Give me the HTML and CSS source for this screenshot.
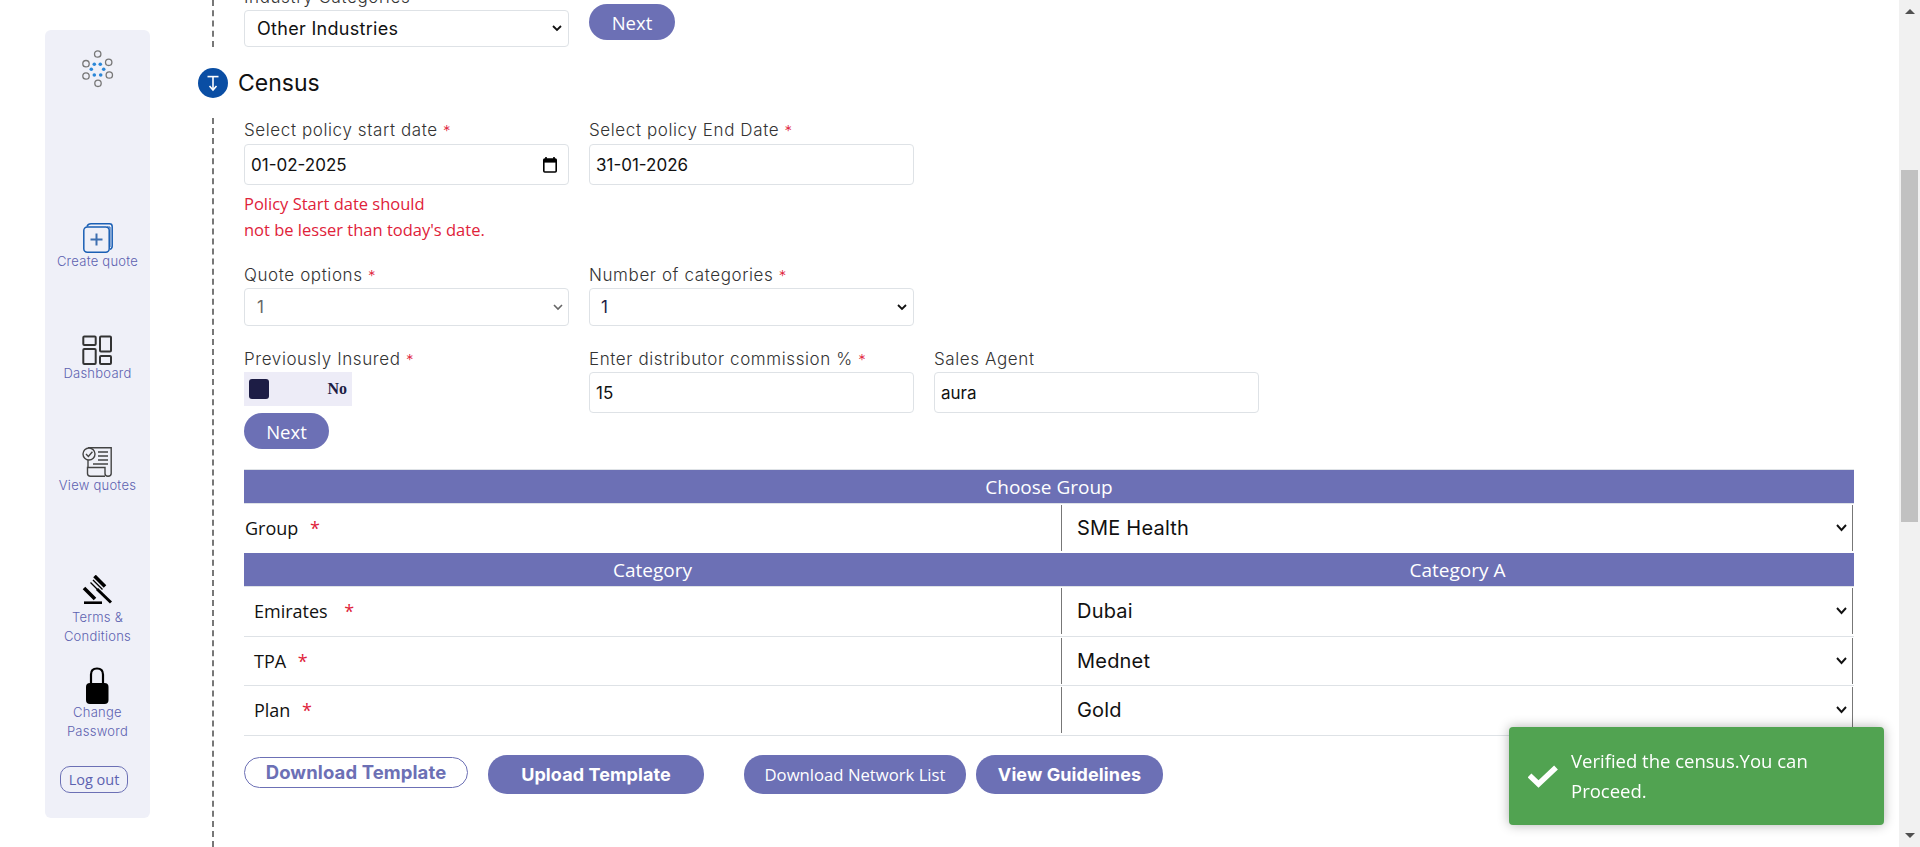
FILE: index.html
```html
<!DOCTYPE html>
<html lang="en">
<head>
<meta charset="utf-8">
<title>Census</title>
<link rel="stylesheet" href="styles.css">
</head>
<body>
<div class="app">
  <div class="side-wrap">
    <nav class="sidebar">
      <svg class="logo" viewBox="0 0 36 38" width="36" height="38">
        <g fill="none" stroke="#777" stroke-width="1.3">
          <circle cx="17.7" cy="4" r="3.2"/><circle cx="6" cy="13.7" r="3.2"/><circle cx="28.7" cy="12.3" r="3.2"/>
          <circle cx="6" cy="26" r="3.2"/><circle cx="29.3" cy="25" r="3.2"/><circle cx="18" cy="33.3" r="3.2"/>
        </g>
        <g fill="#2b87d8">
          <circle cx="14.3" cy="14.3" r="1.8"/><circle cx="20.3" cy="14.3" r="1.8"/><circle cx="11.3" cy="19.3" r="1.8"/>
          <circle cx="23.7" cy="19.3" r="1.8"/><circle cx="14.3" cy="25" r="1.8"/><circle cx="20.7" cy="25" r="1.8"/>
        </g>
      </svg>
      <a class="nav-item nav-create">
        <svg viewBox="0 0 30 30" width="30" height="30" fill="none" stroke="#1a5fb4" stroke-width="1.5">
          <path d="M4 3.6 Q5 .8 8 .8 H26.5 Q29.2 .8 29.2 3.5 V23 Q29.2 25.6 27 26.4"/>
          <path d="M24 4 H27 V24" stroke-width="1"/>
          <rect x=".8" y="4" width="25.4" height="25.2" rx="3.5"/>
          <path d="M13.5 10.5 V22.5 M7.5 16.5 H19.5" stroke="#3e6fb0" stroke-width="2"/>
        </svg>
        <span>Create quote</span>
      </a>
      <a class="nav-item nav-dash">
        <svg viewBox="0 0 30 30" width="30" height="30" fill="none" stroke="#333" stroke-width="2">
          <rect x="1.3" y="1.6" width="12.4" height="8.4" rx="1"/>
          <rect x="18" y="1.6" width="11" height="15" rx="1"/>
          <rect x="1.3" y="14" width="12.4" height="15" rx="1"/>
          <rect x="18" y="21" width="11" height="8" rx="1"/>
        </svg>
        <span>Dashboard</span>
      </a>
      <a class="nav-item nav-view">
        <svg viewBox="0 0 30 30" width="30" height="30" fill="none" stroke="#444" stroke-width="1.4">
          <path d="M6 .8 H29.2 V26.5 Q29.2 29.2 26 29.2"/>
          <path d="M6 13 V20 M23 29.2 H8.5 Q5.5 29.2 5.5 26.5 V20.5 H23 V26.5 Q23 29.2 26 29.2"/>
          <circle cx="7" cy="7" r="6" fill="#eff0f8"/>
          <path d="M4 7 L6.4 9.4 L10.4 4.8"/>
          <path d="M16 5 H26 M16 9 H26 M16 13 H26 M11 17 H26" stroke-width="1.6"/>
        </svg>
        <span>View quotes</span>
      </a>
      <a class="nav-item nav-terms">
        <svg viewBox="0 0 30 30" width="30" height="30" fill="#000" stroke="#000">
          <path d="M2 27.7 H20" stroke-width="2.6"/>
          <path d="M2 13 L13 24 M12.5 1 L23 11.5" stroke-width="3.6"/>
          <path d="M8.5 7.5 L18 17 M11 5 L20.5 14.5" stroke-width="1.4"/>
          <path d="M15 14 L29 27.5" stroke-width="3"/>
        </svg>
        <span>Terms &amp;<br>Conditions</span>
      </a>
      <a class="nav-item nav-lock">
        <svg viewBox="0 0 24 37" width="24" height="37">
          <path d="M6 18 V7.5 Q6 1.5 12 1.5 Q18 1.5 18 7.5 V18" fill="none" stroke="#000" stroke-width="2.2"/>
          <rect x="1" y="16" width="22.5" height="21" rx="4" fill="#000"/>
        </svg>
        <span>Change<br>Password</span>
      </a>
      <button class="logout">Log out</button>
    </nav>
  </div>

  <main class="main">
    <section class="step step-top">
      <div class="top-row">
        <div class="field-top">
          <label class="label">Industry Categories</label>
          <select class="control"><option>Other Industries</option></select>
        </div>
        <button class="btn-next">Next</button>
      </div>
    </section>

    <h2 class="step-title">
      <span class="step-badge">
        <svg viewBox="0 0 30 30" width="30" height="30" fill="none" stroke="#fff" stroke-width="1.6">
          <path d="M9.5 8.6 H20.5"/><path d="M15 9 V21"/><path d="M11.5 18 L15 22 L18.5 18"/>
        </svg>
      </span>
      Census
    </h2>

    <section class="step step-census">
      <div class="form-grid">
        <div class="field">
          <label class="label">Select policy start date <i class="req">*</i></label>
          <div class="date-box">
            <input class="control control-tall" type="text" value="01-02-2025">
            <svg class="cal-icon" viewBox="0 0 14 16" width="14" height="16">
              <path d="M3 0 V3 M11 0 V3" stroke="#000" stroke-width="1.6"/>
              <rect x=".8" y="2" width="12.4" height="13" rx="1" fill="none" stroke="#000" stroke-width="1.6"/>
              <rect x=".8" y="2" width="12.4" height="3.6" fill="#000"/>
            </svg>
          </div>
          <p class="error">Policy Start date should<br>not be lesser than today's date.</p>
        </div>
        <div class="field">
          <label class="label">Select policy End Date <i class="req">*</i></label>
          <input class="control control-tall" type="text" value="31-01-2026">
        </div>
        <div></div>

        <div class="field">
          <label class="label">Quote options <i class="req">*</i></label>
          <select class="control control-muted" disabled><option>1</option></select>
        </div>
        <div class="field">
          <label class="label">Number of categories <i class="req">*</i></label>
          <select class="control control-num"><option>1</option></select>
        </div>
        <div></div>

        <div class="field">
          <label class="label">Previously Insured <i class="req">*</i></label>
          <div class="toggle"><span class="knob"></span><b>No</b></div>
          <button class="btn-next btn-next-2">Next</button>
        </div>
        <div class="field">
          <label class="label">Enter distributor commission % <i class="req">*</i></label>
          <input class="control control-tall" type="text" value="15">
        </div>
        <div class="field">
          <label class="label">Sales Agent</label>
          <input class="control control-tall" type="text" value="aura">
        </div>
      </div>

      <table class="plan-table">
        <colgroup><col class="col-a"><col class="col-b"></colgroup>
        <tr class="head-row first"><th colspan="2">Choose Group</th></tr>
        <tr class="group-row">
          <td class="cell-group">Group <i class="req req-gap">*</i></td>
          <td class="cell-select"><select><option>SME Health</option></select></td>
        </tr>
        <tr class="head-row"><th>Category</th><th>Category A</th></tr>
        <tr>
          <td>Emirates <i class="req req-gap2">*</i></td>
          <td class="cell-select"><select><option>Dubai</option></select></td>
        </tr>
        <tr>
          <td>TPA <i class="req req-gap">*</i></td>
          <td class="cell-select"><select><option>Mednet</option></select></td>
        </tr>
        <tr>
          <td>Plan <i class="req req-gap">*</i></td>
          <td class="cell-select"><select><option>Gold</option></select></td>
        </tr>
      </table>

      <div class="actions">
        <button class="pill pill-outline">Download Template</button>
        <button class="pill pill-strong pill-upload">Upload Template</button>
        <button class="pill pill-plain">Download Network List</button>
        <button class="pill pill-strong pill-guide">View Guidelines</button>
      </div>
    </section>
  </main>

  <div class="scrollbar">
    <span class="arrow arrow-up"></span>
    <span class="thumb"></span>
    <span class="arrow arrow-down"></span>
  </div>
</div>

<div class="toast">
  <svg viewBox="0 0 30 24" width="30" height="24" fill="none" stroke="#fff" stroke-width="5.5">
    <path d="M1.5 11.5 L10.5 20 L28 3.5"/>
  </svg>
  <span>Verified the census.You can Proceed.</span>
</div>
</body>
</html>
```

FILE: styles.css
```css
* { box-sizing: border-box; }
html, body { margin: 0; height: 847px; overflow: hidden; background: #fff; }
body { font-family: "Open Sans", "Noto Sans", sans-serif; color: #111; }

.app { display: flex; height: 847px; overflow: hidden; }

/* sidebar */
.side-wrap { flex: none; width: 150px; padding: 30px 0 29px 45px; }
.sidebar {
  width: 105px; height: 788px; background: #eff0f8; border-radius: 6px;
  display: flex; flex-direction: column; align-items: center;
}
.logo { margin-top: 20px; margin-left: 1px; flex: none; }
.nav-item {
  display: flex; flex-direction: column; align-items: center; text-align: center;
  font-family: Inter, sans-serif; font-weight: 300; font-size: 13px; letter-spacing: .25px; line-height: 19px; color: #5d62b0;
}
.nav-item svg { display: block; margin-bottom: -1px; }
.nav-create { margin-top: 135px; }
.nav-dash { margin-top: 64px; }
.nav-view { margin-top: 64px; }
.nav-terms { margin-top: 80px; }
.nav-terms svg { margin-bottom: 3px; }
.nav-lock { margin-top: 21px; }
.nav-lock svg { margin-bottom: -1.5px; }
.logout {
  margin-top: 25.5px; margin-right: 7px; width: 68px; height: 27px; padding: 0;
  border: 1px solid #6c70b5; border-radius: 10px; background: transparent;
  font: 14.5px "Open Sans", sans-serif; color: #5d62b0;
}

/* main column */
.main { flex: none; width: 1749px; padding-left: 48px; }
.step { margin-left: 14px; border-left: 2px dashed #777; padding-left: 30px; display: flow-root; }
.step-top { height: 47px; }
.top-row { display: flex; gap: 20px; margin-top: -13px; }
.field-top { width: 325px; flex: none; }
.field-top .label { height: 23px; margin: 0; }
.top-row .btn-next { margin-top: 17px; width: 86px; }

.step-title {
  display: flex; align-items: center; gap: 10px; margin: 21px 0 20px; height: 30px;
  font: 400 23px Inter, sans-serif; color: #111;
}
.step-badge {
  width: 30px; height: 30px; border-radius: 50%; background: #0a4ea4; flex: none; display: block;
}
.step-badge svg { display: block; }

.step-census { padding-top: 2px; height: 729px; }

.form-grid { display: grid; grid-template-columns: repeat(3, 325px); column-gap: 20px; width: 1015px; }
.field { display: flex; flex-direction: column; align-items: stretch; }
.label {
  display: block; height: 20px; margin-bottom: 4px;
  font: 300 17px/20px Inter, sans-serif; letter-spacing: .6px; color: #333; white-space: nowrap;
}
.req { color: #e0223a; font-style: normal; font-size: 15px; letter-spacing: 0; }

.control {
  display: block; width: 100%; height: 38px; border: 1px solid #dee2e6; border-radius: 4px;
  background: #fff; padding: 0 6px; font: 400 17px "Inter", sans-serif; color: #111; outline: none;
}
select.control {
  appearance: none; padding-left: 12px;
  background: #fff url("data:image/svg+xml,%3Csvg xmlns='http://www.w3.org/2000/svg' width='10' height='7'%3E%3Cpath d='M1 1 L5 5 L9 1' fill='none' stroke='%23111' stroke-width='1.8'/%3E%3C/svg%3E") no-repeat right 6px center;
}
.field-top .control { height: 37px; font-size: 18px; letter-spacing: .3px; }
.control-tall { height: 41px; }
select.control-muted {
  color: #666; opacity: 1; padding-left: 12px; background-position: right 5px center;
  background-image: url("data:image/svg+xml,%3Csvg xmlns='http://www.w3.org/2000/svg' width='10' height='7'%3E%3Cpath d='M1 1 L5 5 L9 1' fill='none' stroke='%23666' stroke-width='1.6'/%3E%3C/svg%3E");
}
select.control-num { color: #1d1d45; padding-left: 11px; }
.date-box { position: relative; }
.cal-icon { position: absolute; right: 12px; top: 13px; }

.error {
  margin: 6px 0 22px; font-size: 16.5px; line-height: 26px; color: #e0223a;
}
.form-grid > .field:nth-child(4), .form-grid > .field:nth-child(5) { margin-bottom: 23px; }
.field:nth-child(n+4) .label { margin-bottom: 3px; }

.toggle {
  width: 108px; height: 34px; background: #edecf7; display: flex; align-items: center;
  justify-content: space-between; padding: 0 5px;
}
.knob { width: 20px; height: 20px; background: #1d1d45; border-radius: 3px; }
.toggle b { font: 700 16px "Liberation Serif", serif; color: #1d1d45; }

.btn-next {
  height: 36px; width: 85px; border: none; border-radius: 18px; background: #6c70b5;
  color: #fff; font: 400 18.5px "Open Sans", sans-serif; padding: 0;
}
.btn-next-2 { margin-top: 7px; }

/* table */
.plan-table {
  width: 1610px; margin-top: 20px; border-collapse: collapse; table-layout: fixed;
  font-size: 18px;
}
.col-a { width: 817px; }
.col-b { width: 793px; }
.plan-table th {
  height: 34px; padding: 1px 0 0; background: #6c70b5; color: #fff; font-weight: 400; font-size: 19px;
  border-bottom: 1px solid #dee2e6;
}
.head-row.first th { border-top: 1px solid #dee2e6; }
.plan-table td {
  height: 49.5px; padding: 0 0 0 10px; border-bottom: 1px solid #dee2e6; color: #111;
}
.plan-table td.cell-group { padding-left: 1px; border-bottom: none; }
.group-row td { height: 49px; border-bottom: none; }
.plan-table .req { font-size: 18px; }
.req-gap { margin-left: 7px; }
.req-gap2 { margin-left: 12px; }
.plan-table td.cell-select { padding: 0 1px 0 0; }
.cell-select select {
  display: block; width: 792px; height: 46px; border: none; border-left: 1px solid #777; border-right: 1px solid #777;
  appearance: none; padding-left: 15px; font: 400 20px Inter, sans-serif; letter-spacing: .2px; color: #111; outline: none;
  background: #fff url("data:image/svg+xml,%3Csvg xmlns='http://www.w3.org/2000/svg' width='11' height='8'%3E%3Cpath d='M1 1 L5.5 6 L10 1' fill='none' stroke='%23111' stroke-width='1.9'/%3E%3C/svg%3E") no-repeat right 5px center;
}

/* actions */
.actions { display: flex; align-items: center; margin-top: 19px; }
.pill {
  height: 39px; border: none; border-radius: 19px; background: #6c70b5; color: #fff; padding: 0;
  font: 700 18px Inter, sans-serif; letter-spacing: .1px;
}
.pill-outline {
  height: 31px; width: 224px; margin-top: -4px; background: #fff; border: 1px solid #6c70b5; border-radius: 16px; color: #6c70b5;
  font-size: 18.5px;
}
.pill-upload { width: 216px; margin-left: 20px; }
.pill-plain { width: 222px; margin-left: 40px; font: 400 16.7px "Open Sans", sans-serif; letter-spacing: 0; }
.pill-guide { width: 187px; margin-left: 10px; }

/* scrollbar */
.scrollbar {
  flex: none; width: 21px; height: 847px; background: #f1f1f1; display: flex; flex-direction: column; align-items: center;
}
.arrow { width: 0; height: 0; border-left: 5px solid transparent; border-right: 5px solid transparent; flex: none; }
.arrow-up { margin-top: 9px; border-bottom: 5px solid #505050; }
.thumb { width: 17px; height: 352px; background: #c1c1c1; margin-top: 156px; flex: none; }
.arrow-down { margin-top: 311px; border-top: 5px solid #505050; }

/* toast */
.toast {
  position: fixed; left: 1509px; top: 727px; width: 375px; height: 98px;
  background: #51a351; border-radius: 4px; box-shadow: 0 0 12px rgba(0,0,0,.3);
  display: flex; align-items: center; gap: 13px; padding: 0 30px 0 19px;
  color: #fff; font-size: 18.5px; line-height: 30px;
}
.toast svg { flex: none; }
```
